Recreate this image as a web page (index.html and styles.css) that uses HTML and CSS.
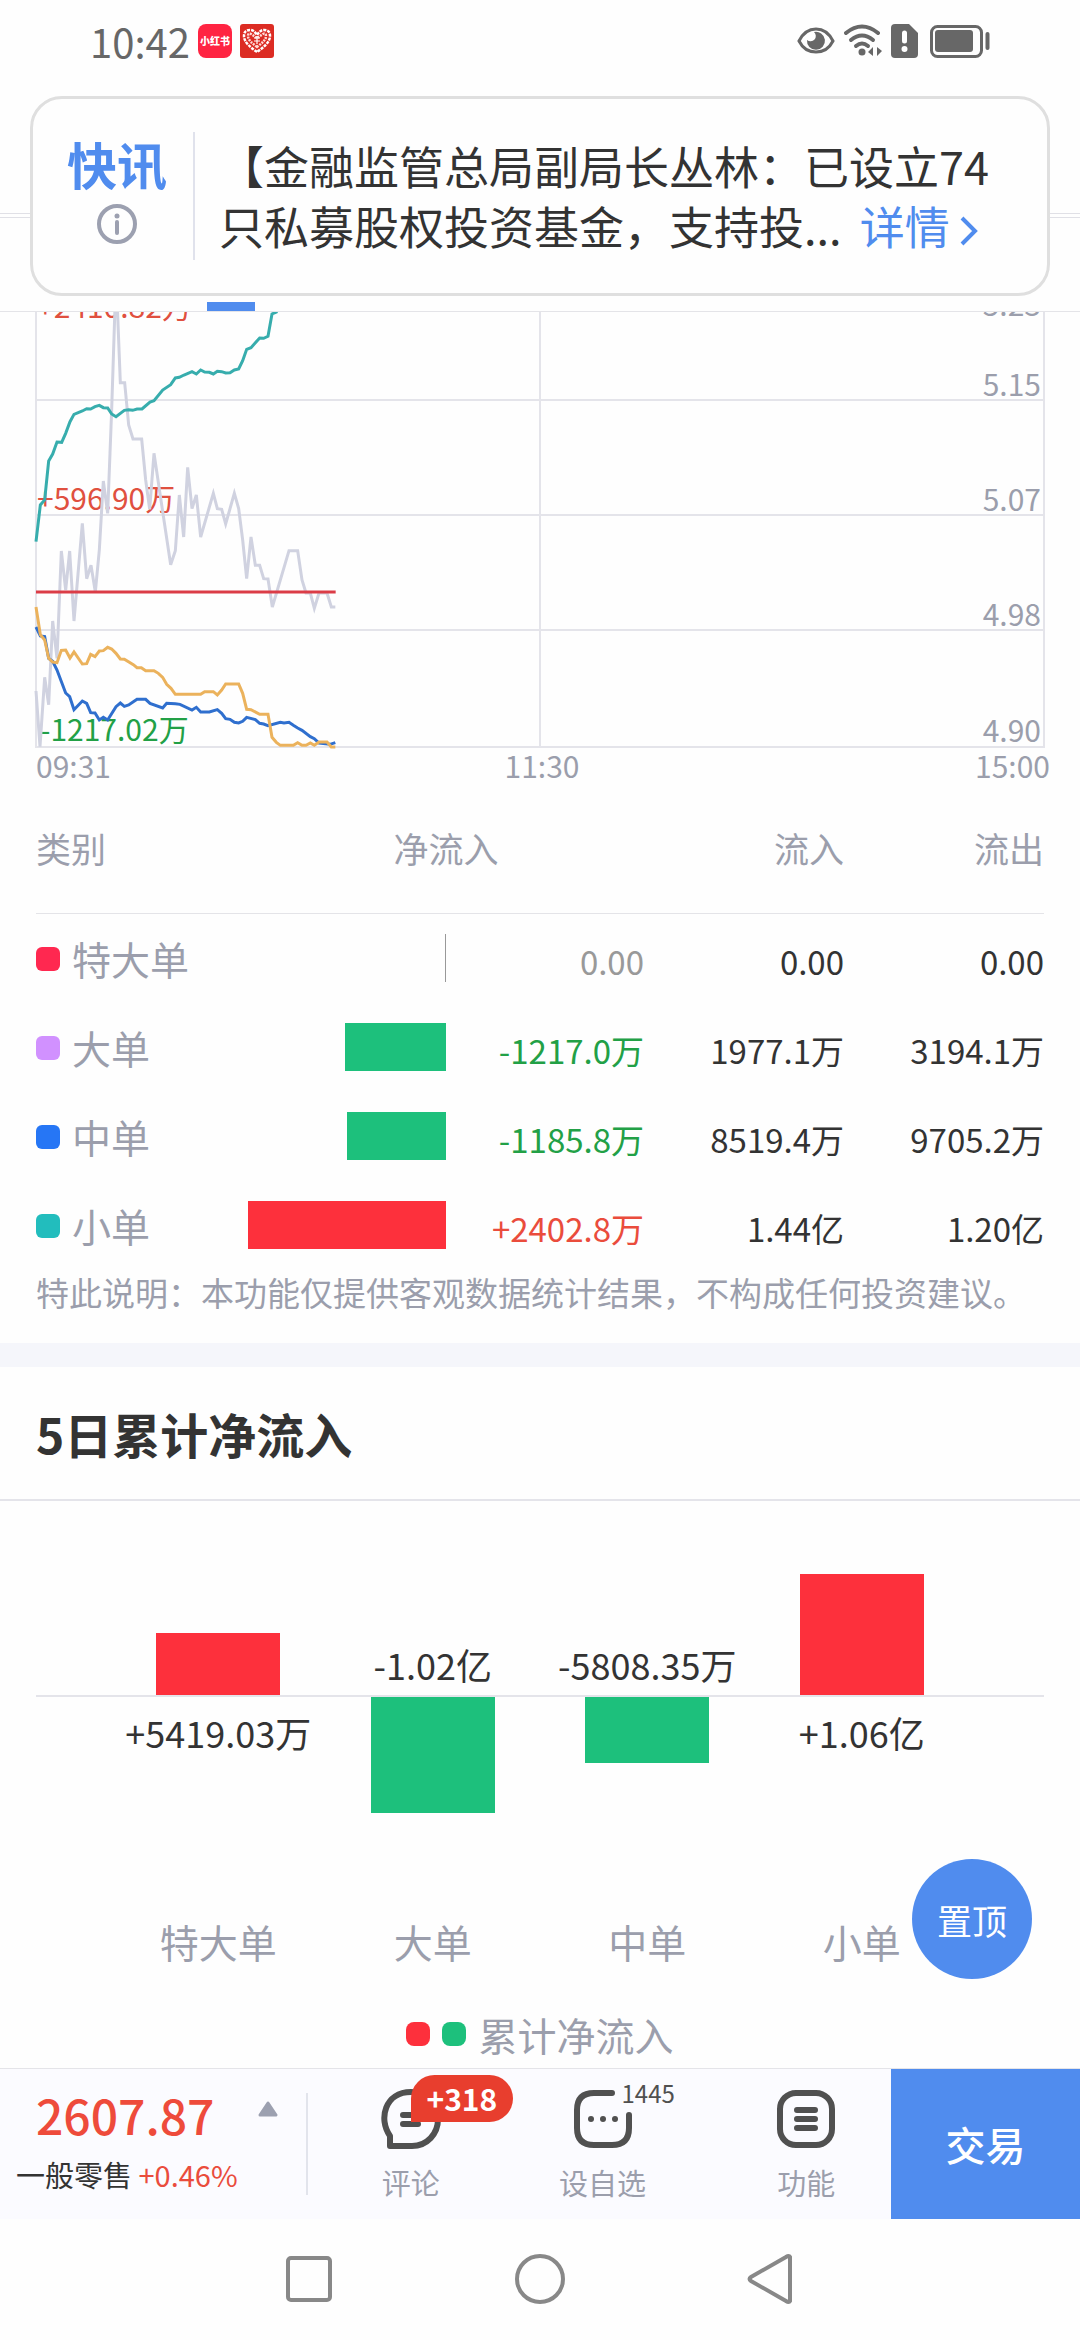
FILE: index.html
```html
<!DOCTYPE html>
<html lang="zh-CN">
<head>
  <meta charset="UTF-8" />
  <meta name="viewport" content="width=device-width, initial-scale=1.0"/>
  <title>资金流向</title>
  <link rel="stylesheet" href="styles.css">
</head>
<body>

<div class="status-bar">
  <span class="clock">10:42</span>
  <svg class="app-icon" width="34" height="34" viewBox="0 0 34 34">
    <rect width="34" height="34" rx="8" fill="#ff2442"/>
    <text x="17" y="21" text-anchor="middle" class="app-icon-text">小红书</text>
  </svg>
  <svg class="app-icon" width="34" height="34" viewBox="0 0 34 34">
    <rect width="34" height="34" rx="3" fill="#dc2c23"/>
    <path d="M17 28C10 23 4 18 4 12C4 7 7 6 10 6C13 6 15 8 17 11C19 8 21 6 24 6C27 6 30 7 30 12C30 18 24 23 17 28Z" fill="none" stroke="#fff" stroke-width="2.5" stroke-dasharray="3 1"/>
    <path d="M17 23C12 19 8 16 8 12C8 10 9 9 11 10L17 14L23 10C25 9 26 10 26 12C26 16 22 19 17 23Z" fill="none" stroke="#ffd9d5" stroke-width="2.5" stroke-dasharray="2 1"/>
    <path d="M14 14H20M14 17H20M17 12V20" stroke="#fff" stroke-width="1.2"/>
  </svg>
  <span class="spacer"></span>
  <svg width="38" height="34" viewBox="0 0 38 34">
    <path d="M2 17C6 9 12 5 19 5S32 9 36 17C32 25 26 28 19 28S6 25 2 17Z" fill="none" stroke="#676767" stroke-width="3"/>
    <path d="M17 8A9 9 0 1 1 10 16A5 5 0 0 0 17 8Z" fill="#676767"/>
  </svg>
  <svg class="wifi" width="38" height="34" viewBox="0 0 38 34">
    <g fill="none" stroke="#676767" stroke-width="4" stroke-linecap="round">
      <path d="M2 9Q18 -4 34 9"/>
      <path d="M7 16Q18 7 29 16"/>
      <path d="M12 22Q18 17 24 22"/>
    </g>
    <circle cx="18" cy="28" r="3.5" fill="#676767"/>
    <path d="M29 23V32L24 28ZM33 23V32L38 27Z" fill="#676767"/>
  </svg>
  <svg class="sim" width="27" height="34" viewBox="0 0 27 34">
    <path d="M4 0H18L27 9V30Q27 34 23 34H4Q0 34 0 30V4Q0 0 4 0Z" fill="#676767"/>
    <path d="M13.500 9V17" stroke="#fff" stroke-width="5" stroke-linecap="round"/>
    <circle cx="13.500" cy="25" r="3" fill="#fff"/>
  </svg>
  <svg class="battery" width="60" height="34" viewBox="0 0 60 34">
    <rect x="1.500" y="2.500" width="50" height="30" rx="6" fill="none" stroke="#676767" stroke-width="3"/>
    <rect x="5" y="6" width="38" height="22" rx="3" fill="#676767"/>
    <path d="M57.500 10V24" stroke="#676767" stroke-width="4" stroke-linecap="round"/>
  </svg>
</div>

<header class="app-header">
  <div class="title-bar"></div>
  <div class="tab-strip"><span class="tab-line"></span></div>
</header>

<section class="news-card">
  <div class="news-tag">
    <strong>快讯</strong>
    <svg width="40" height="40" viewBox="0 0 40 40">
      <circle cx="20" cy="20" r="18" fill="none" stroke="#9ca0b0" stroke-width="4"/>
      <circle cx="20" cy="12" r="2.500" fill="#9ca0b0"/>
      <path d="M20 18V29" stroke="#9ca0b0" stroke-width="4" stroke-linecap="round"/>
    </svg>
  </div>
  <div class="news-text">
    <p>【金融监管总局副局长丛林：已设立74</p>
    <p>只私募股权投资基金，支持投...
      <a href="#">详情
        <svg width="18" height="32" viewBox="0 0 18 32"><path d="M2 3L15 16L2 29" fill="none" stroke="#508cee" stroke-width="4"/></svg>
      </a>
    </p>
  </div>
</section>

<main>
  <svg class="trend" viewBox="0 0 1080 480">
    <g class="axis-label">
      <text x="37" y="6" class="up">+2410.82万</text>
      <text x="37" y="198" class="up">+596.90万</text>
      <text x="40" y="429" class="down">-1217.02万</text>
      <text x="1041" y="4" text-anchor="end">5.23</text>
      <text x="1041" y="84" text-anchor="end">5.15</text>
      <text x="1041" y="199" text-anchor="end">5.07</text>
      <text x="1041" y="314" text-anchor="end">4.98</text>
      <text x="1041" y="430" text-anchor="end">4.90</text>
      <text x="36" y="466">09:31</text>
      <text x="542" y="466" text-anchor="middle">11:30</text>
      <text x="1050" y="466" text-anchor="end">15:00</text>
    </g>
    <path class="grid" d="M36 0V435H1044V0M540 0V435M36 88H1044M36 203H1044M36 318H1044"/>
    <!-- intraday lines, drawn on a finer grid -->
    <svg x="0" y="-12" width="1080" height="490" viewBox="0 0 3240 1470">
      <polyline class="line price" points="108,1173 120,1340 134,1132 146,1214 158,963 171,1075 184,753 197,870 209,753 222,963 247,670 260,836 273,796 286,876 298,750 310,543 323,640 335,330 345,20 352,20 361,248 374,248 386,375 399,417 425,417 437,540 449,628 462,460 487,628 512,794 526,752 538,585 551,711 563,502 576,626 589,585 602,711 640,580 652,626 665,628 677,672 703,580 716,626 728,720 740,836 753,711 766,796 779,796 791,836 804,837 817,921 867,752 893,752 906,840 918,879 931,879 943,925 957,879 981,879 994,921 1006,921"/>
      <polyline class="line small" points="108,725 121,615 134,600 146,483 158,462 171,426 185,427 197,400 210,365 222,343 247,333 260,326 272,327 285,320 298,316 310,323 323,324 335,342 348,350 373,331 386,329 398,331 411,327 426,327 450,306 462,302 488,270 512,254 526,234 538,232 552,225 576,215 589,222 602,210 614,216 628,217 640,222 652,214 665,215 677,219 690,218 703,210 716,207 728,182 740,148 753,143 779,114 791,115 804,109 816,42 829,36 842,10"/>
      <polyline class="line medium" points="108,981 121,1008 134,1010 146,1075 158,1084 171,1110 197,1179 209,1190 222,1229 247,1203 260,1210 272,1238 285,1239 298,1260 310,1252 323,1260 348,1220 361,1209 373,1219 386,1215 411,1198 437,1198 450,1210 488,1224 500,1210 526,1211 540,1213 576,1230 589,1222 602,1236 628,1236 652,1229 665,1240 677,1256 690,1258 703,1267 716,1269 728,1264 740,1252 766,1259 779,1270 791,1272 804,1277 841,1267 852,1269 867,1267 880,1276 893,1284 906,1291 931,1310 943,1316 957,1329 990,1333 1006,1328"/>
      <polyline class="line large" points="108,921 121,1004 134,1020 146,1075 158,1086 171,1088 184,1051 197,1050 210,1074 222,1056 247,1092 260,1091 272,1063 285,1070 298,1053 310,1052 323,1042 335,1047 348,1060 361,1077 373,1078 400,1094 411,1103 424,1103 437,1112 462,1112 475,1120 488,1132 500,1153 513,1165 526,1183 602,1183 614,1175 640,1175 652,1185 665,1170 677,1152 716,1152 728,1180 740,1228 753,1229 779,1243 804,1243 816,1312 829,1327 841,1336 880,1336 893,1328 906,1336 918,1336 931,1329 943,1336 957,1326 981,1326 994,1341 1006,1341"/>
      <polyline class="line huge" points="108,876 1007,876"/>
    </svg>
  </svg>

  <section class="flow">
    <table>
      <colgroup>
        <col><col class="col-bar"><col class="col-net"><col class="col-amount"><col class="col-amount">
      </colgroup>
      <thead>
        <tr>
          <th class="left">类别</th>
          <th class="center" colspan="2">净流入</th>
          <th>流入</th>
          <th>流出</th>
        </tr>
      </thead>
      <tbody>
        <tr>
          <td class="kind"><i class="chip chip-huge"></i>特大单</td>
          <td><div class="bar bar-zero"></div></td>
          <td class="num zero">0.00</td>
          <td class="num">0.00</td>
          <td class="num">0.00</td>
        </tr>
        <tr>
          <td class="kind"><i class="chip chip-large"></i>大单</td>
          <td><div class="bar bar-down" style="width: 51%"></div></td>
          <td class="num down">-1217.0万</td>
          <td class="num">1977.1万</td>
          <td class="num">3194.1万</td>
        </tr>
        <tr>
          <td class="kind"><i class="chip chip-medium"></i>中单</td>
          <td><div class="bar bar-down" style="width: 50%"></div></td>
          <td class="num down">-1185.8万</td>
          <td class="num">8519.4万</td>
          <td class="num">9705.2万</td>
        </tr>
        <tr>
          <td class="kind"><i class="chip chip-small"></i>小单</td>
          <td><div class="bar bar-up" style="width: 100%"></div></td>
          <td class="num up">+2402.8万</td>
          <td class="num">1.44亿</td>
          <td class="num">1.20亿</td>
        </tr>
      </tbody>
    </table>
    <p class="note">特此说明：本功能仅提供客观数据统计结果，不构成任何投资建议。</p>
  </section>

  <section class="five-day">
    <h2>5日累计净流入</h2>
    <div class="plot">
      <div class="plot-row plot-above">
        <div><div class="column bar-up" style="height: 62px"></div></div>
        <div><span>-1.02亿</span></div>
        <div><span>-5808.35万</span></div>
        <div><div class="column bar-up" style="height: 121px"></div></div>
      </div>
      <div class="plot-row plot-below">
        <div><span>+5419.03万</span></div>
        <div><div class="column bar-down" style="height: 116px"></div></div>
        <div><div class="column bar-down" style="height: 66px"></div></div>
        <div><span>+1.06亿</span></div>
      </div>
      <div class="plot-row plot-names">
        <div>特大单</div>
        <div>大单</div>
        <div>中单</div>
        <div>小单</div>
      </div>
    </div>
    <div class="legend"><i class="chip bar-up"></i><i class="chip bar-down"></i>累计净流入</div>
  </section>

  <button class="to-top" type="button">置顶</button>
</main>

<footer class="bottom-bar">
  <div class="quote">
    <div class="quote-main">
      <span class="quote-price">2607.87</span>
      <svg width="20" height="16" viewBox="0 0 20 16"><path d="M10 2L18 14H2Z" fill="#9ca0b0" stroke="#9ca0b0" stroke-width="3" stroke-linejoin="round"/></svg>
    </div>
    <div class="quote-sub">一般零售 <span class="up">+0.46%</span></div>
  </div>
  <nav class="tabs">
    <button type="button" class="tab">
      <span class="tab-icon">
        <svg width="60" height="60" viewBox="0 0 60 60">
          <path d="M9 57V47C-3 30 4 3 30 3C45 3 57 15 57 30C57 45 46 57 31 57Z" fill="none" stroke="#505050" stroke-width="6" stroke-linejoin="round"/>
          <path d="M22 26H37M22 35H37" stroke="#505050" stroke-width="6" stroke-linecap="round"/>
        </svg>
        <span class="badge">+318</span>
      </span>
      评论
    </button>
    <button type="button" class="tab">
      <span class="tab-icon">
        <svg width="60" height="60" viewBox="0 0 60 60">
          <path d="M39 4H21Q4 4 4 21V39Q4 56 21 56H39Q56 56 56 39V26" fill="none" stroke="#505050" stroke-width="6" stroke-linecap="round"/>
          <g fill="#505050"><circle cx="18" cy="30" r="3"/><circle cx="30" cy="30" r="3"/><circle cx="42" cy="30" r="3"/></g>
        </svg>
        <span class="count">1445</span>
      </span>
      设自选
    </button>
    <button type="button" class="tab">
      <span class="tab-icon">
        <svg width="60" height="60" viewBox="0 0 60 60">
          <rect x="4" y="4" width="52" height="52" rx="16" fill="none" stroke="#505050" stroke-width="6"/>
          <path d="M21 21H39M21 30H39M21 39H39" stroke="#505050" stroke-width="6" stroke-linecap="round"/>
        </svg>
      </span>
      功能
    </button>
  </nav>
  <button type="button" class="trade">交易</button>
</footer>

<div class="system-nav">
  <svg width="50" height="50" viewBox="0 0 50 50"><rect x="4" y="4" width="42" height="42" rx="3"/></svg>
  <svg width="50" height="50" viewBox="0 0 50 50"><circle cx="25" cy="25" r="23"/></svg>
  <svg width="50" height="50" viewBox="0 0 50 50"><path d="M44 3V47Q43 49 40 47L5 27Q2 25 5 23L40 3Q43 1 44 3Z"/></svg>
</div>

</body>
</html>
```

FILE: styles.css
```css
* {
  box-sizing: border-box;
}
body {
  position: relative;
  display: flex;
  flex-direction: column;
  min-height: 100vh;
  margin: 0;
  background: #fefefe;
  color: #333;
  font-family: 'Noto Sans CJK SC', 'Noto Sans', sans-serif;
}
button {
  border: none;
  padding: 0;
  background: none;
  font-family: inherit;
  cursor: pointer;
}
p, h2 {
  margin: 0;
}
.up {
  color: #ea4c3c;
  fill: #e0503f;
}
.down {
  color: #22a046;
  fill: #22a046;
}

/* status bar */
.status-bar {
  display: flex;
  align-items: center;
  height: 82px;
  padding: 0 90px;
}
.clock {
  color: #676767;
  font-size: 40px;
  line-height: 48px;
}
.app-icon {
  margin-left: 8px;
}
.app-icon-text {
  fill: #fff;
  font-size: 10px;
  font-weight: 900;
}
.spacer {
  flex: 1;
}
.wifi, .sim {
  margin-left: 9px;
}
.battery {
  margin-left: 12px;
}

/* header under the news card */
.title-bar {
  height: 132px;
  border-bottom: 1px solid #e0e0e6;
}
.tab-strip {
  display: flex;
  align-items: flex-end;
  height: 95px;
  margin-top: 3px;
  padding-left: 207px;
  border-top: 1px solid #e0e0e6;
  border-bottom: 1px solid #e4e4e8;
}
.tab-line {
  width: 48px;
  height: 9px;
  background: #508cee;
}
.news-card {
  position: absolute;
  top: 96px;
  left: 30px;
  right: 30px;
  display: flex;
  align-items: center;
  height: 200px;
  border: 3px solid #dfdfdf;
  border-radius: 32px;
  background: #fefefe;
}
.news-tag {
  display: flex;
  flex-direction: column;
  align-items: center;
  gap: 10px;
  width: 162px;
  height: 128px;
  padding-left: 8px;
  border-right: 2px solid #e0e2ec;
}
.news-tag strong {
  color: #508cee;
  font-size: 50px;
  line-height: 62px;
}
.news-text {
  flex: 1;
  padding-left: 24px;
  font-size: 45px;
  line-height: 60px;
  white-space: nowrap;
}
.news-text a {
  margin-left: 8px;
  color: #508cee;
  text-decoration: none;
}
.news-text svg {
  vertical-align: -2px;
}

/* intraday chart */
main {
  position: relative;
}
.trend {
  display: block;
  width: 100%;
  margin-bottom: -10px;
  overflow: hidden;
}
.axis-label {
  fill: #9b9eac;
  font-size: 30px;
}
.grid {
  fill: none;
  stroke: #e4e4ea;
  stroke-width: 2;
}
.line {
  fill: none;
  stroke-width: 9;
}
.price { stroke: #d0d2e0; }
.small { stroke: #37adad; }
.medium { stroke: #2f6fce; }
.large { stroke: #ebb25c; }
.huge { stroke: #db3d47; }

/* order flow table */
.flow {
  padding: 0 36px 28px;
  border-bottom: 24px solid #f5f6fb;
}
table {
  width: 100%;
  border-collapse: collapse;
  table-layout: fixed;
}
.col-bar, .col-net {
  width: 198px;
}
.col-amount {
  width: 200px;
}
th, td {
  padding: 0;
  text-align: right;
  white-space: nowrap;
}
thead tr {
  height: 131px;
  border-bottom: 1px solid #e4e4e8;
}
th {
  color: #9b9eac;
  font-size: 35px;
  font-weight: 400;
}
.left {
  text-align: left;
}
.center {
  text-align: center;
}
tbody tr {
  height: 89px;
}
.kind {
  color: #9b9eac;
  font-size: 39px;
  line-height: 48px;
  text-align: left;
}
.chip {
  display: inline-block;
  width: 24px;
  height: 24px;
  margin-right: 12px;
  border-radius: 6px;
}
.kind .chip {
  vertical-align: 4px;
}
.chip-huge { background: #ff2850; }
.chip-large { background: #d191ff; }
.chip-medium { background: #2676f5; }
.chip-small { background: #22bdbd; }
.bar {
  height: 48px;
  margin-left: auto;
}
.bar-up {
  background: #fd303c;
}
.bar-down {
  background: #1dc07c;
}
.bar-zero {
  width: 1px;
  background: #999;
}
.num {
  padding-top: 6px;
  font-size: 33px;
}
.zero {
  color: #999;
}
.note {
  color: #9b9eac;
  font-size: 33px;
  line-height: 46px;
  white-space: nowrap;
}

/* five day totals */
h2 {
  padding: 0 36px;
  border-bottom: 2px solid #e4e4ea;
  font-size: 48px;
  line-height: 132px;
}
.plot {
  padding: 0 36px;
}
.plot-row {
  display: grid;
  grid-template-columns: repeat(4, 1fr);
  padding: 0 75px;
  font-size: 36px;
  line-height: 50px;
  text-align: center;
  white-space: nowrap;
}
.plot-row > div {
  display: flex;
  flex-direction: column;
  align-items: center;
}
.plot-above {
  height: 196px;
  align-items: end;
  border-bottom: 2px solid #e4e4ea;
}
.plot-above span {
  padding-bottom: 6px;
}
.plot-below {
  height: 214px;
}
.plot-below span {
  padding-top: 10px;
}
.plot-names {
  color: #9b9eac;
  font-size: 39px;
  line-height: 60px;
}
.column {
  width: 58%;
}
.legend {
  display: flex;
  align-items: center;
  justify-content: center;
  height: 97px;
  padding-top: 28px;
  color: #9b9eac;
  font-size: 39px;
}
.legend .chip {
  border-radius: 8px;
}
.to-top {
  position: absolute;
  right: 48px;
  bottom: 89px;
  width: 120px;
  height: 120px;
  border-radius: 50%;
  background: #508cee;
  color: #fff;
  font-size: 35px;
}

/* bottom bar */
.bottom-bar {
  display: flex;
  height: 151px;
  border-top: 1px solid #e4e4e8;
  background: #fbfbff;
}
.quote {
  width: 308px;
  padding-top: 12px;
  background: linear-gradient(#e2e4ec, #e2e4ec) right center / 2px 102px no-repeat;
}
.quote-main {
  display: flex;
  align-items: center;
  justify-content: space-between;
  padding: 0 30px 0 36px;
}
.quote-main svg {
  margin-bottom: 10px;
}
.quote-price {
  color: #ee4b3b;
  font-size: 48px;
  font-weight: 500;
  line-height: 66px;
}
.quote-sub {
  padding-left: 16px;
  font-size: 29px;
  line-height: 54px;
  white-space: nowrap;
}
.tabs {
  flex: 1;
  display: grid;
  grid-template-columns: 146fr 238fr 170fr;
  padding-left: 30px;
}
.tab {
  display: flex;
  flex-direction: column;
  align-items: center;
  padding-top: 20px;
  color: #9b9eac;
  font-size: 29px;
  line-height: 66px;
}
.tab-icon {
  position: relative;
  width: 60px;
  height: 60px;
}
.tab-icon svg {
  display: block;
}
.badge {
  position: absolute;
  left: 30px;
  top: -14px;
  width: 102px;
  height: 47px;
  border-radius: 24px 24px 24px 0;
  background: #e83e2e;
  color: #fff;
  font-size: 30px;
  font-weight: 700;
  line-height: 47px;
}
.count {
  position: absolute;
  left: 49px;
  top: -12px;
  color: #505050;
  font-size: 24px;
  line-height: 32px;
}
.trade {
  width: 189px;
  background: #508cee;
  color: #fff;
  font-size: 40px;
  font-weight: 500;
}

/* android keys */
.system-nav {
  display: flex;
  align-items: center;
  justify-content: center;
  gap: 181px;
  height: 120px;
}
.system-nav svg {
  fill: none;
  stroke: #888;
  stroke-width: 4;
}
```
